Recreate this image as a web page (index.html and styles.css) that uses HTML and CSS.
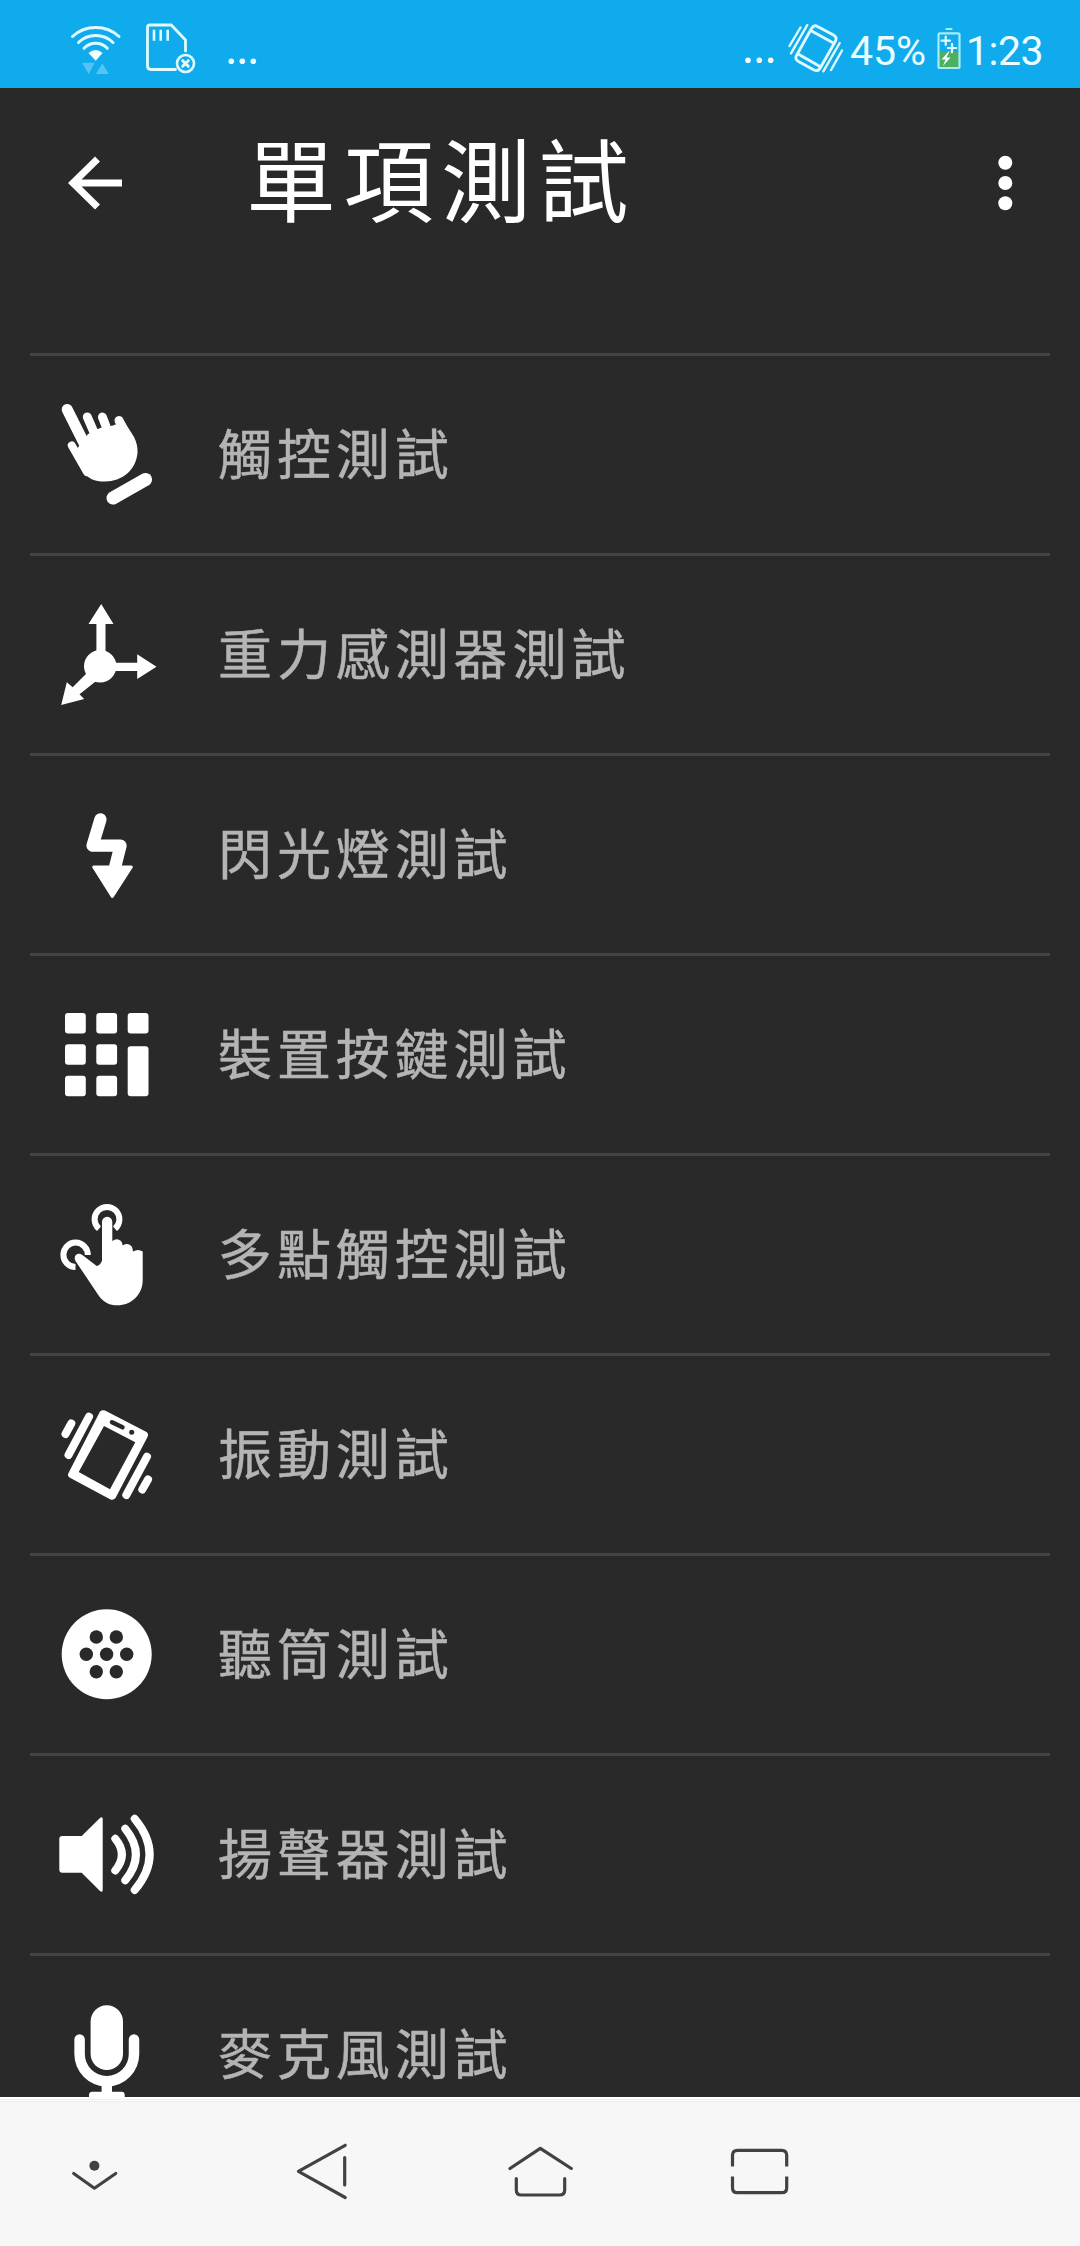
FILE: index.html
```html
<!DOCTYPE html>
<html lang="zh-Hant">
<head>
<meta charset="utf-8">
<title>單項測試</title>
<link rel="stylesheet" href="styles.css">
</head>
<body>
<div class="screen">
  <div class="status">
    <svg class="status-left" width="200" height="88" viewBox="65 0 200 88">
      <g class="line">
        <path stroke-width="3" d="M72.5 36.5Q82 27.5 95.7 27.5T119 36.5M78.5 42.5Q85.500 35.500 95.700 35.500T113 42.500M84 48.300Q89 43.300 95.700 43.300T107.300 48.300"/>
        <path stroke-width="2.800" d="M185.500 51V40L171.300 25H150Q147.500 25 147.500 27.500V66Q147.500 69.500 151 69.500H175.500"/>
        <path stroke-width="2.600" stroke-linecap="butt" d="M154 29.700V40.700M160.700 29.700V40.700M167.700 29.700V40.700"/>
        <circle cx="185.500" cy="63.500" r="8.500" stroke-width="2.600"/>
        <path stroke-width="3" d="M182.700 60.700L188.300 66.300M188.300 60.700L182.700 66.300"/>
      </g>
      <path class="solid" d="M88.500 53Q95.700 47 102.500 53L95.700 60.700Z"/>
      <path class="traffic" d="M82 62.700H94.700L88.700 74ZM96 74H108.700L102.300 63.300Z"/>
      <g class="solid"><circle cx="231.300" cy="61.300" r="2.800"/><circle cx="242.300" cy="61.300" r="2.800"/><circle cx="253.300" cy="61.300" r="2.800"/></g>
    </svg>
    <svg class="status-mode" width="106" height="88" viewBox="742 0 106 88">
      <g class="solid"><circle cx="748" cy="60.300" r="2.800"/><circle cx="759.300" cy="60.300" r="2.800"/><circle cx="770.700" cy="60.300" r="2.800"/></g>
      <g class="line" stroke-width="2.800">
        <path d="M817.500 26.500L833.500 35Q837.500 37.500 835.500 41L820.500 67.500Q818 72 814 70L798.500 61.500Q794.500 59 796.500 55.500L811.500 28.500Q814 24.500 817.500 26.500ZM811.500 31L832.500 42.500M799 54.500L820 66.500"/>
        <path stroke-width="2.400" d="M800.500 27.500L789.500 46M807.300 25L791 53.300M839.700 43L823.300 71.300M842 50.500L831 70"/>
      </g>
    </svg>
    <span class="pct">45%</span>
    <svg class="battery" width="26" height="88" viewBox="936 0 26 88">
      <path class="charge" d="M938.500 51.700H959.500V67.500H938.500Z"/>
      <g class="line" stroke-width="2.200">
        <rect x="938.500" y="33.300" width="21" height="34.700" rx="1.500" class="cell"/>
        <path class="cell" d="M946.300 29H951.500"/>
        <path d="M945.700 36.500V45M941.500 40.700H950M952 43.800V52.300M947.800 48H956.200"/>
      </g>
      <path class="solid" d="M948.500 51.500L941.500 59.500H945.500L943 66L950.500 57.500H946.500L949.500 51.500Z"/>
    </svg>
    <span class="clock">1:23</span>
  </div>

  <div class="header">
    <svg class="back" width="60" height="60" viewBox="0 0 60 60"><path d="M32.500 6L8 30L32.500 54M8 30H57"/></svg>
    <h1 class="title">單項測試</h1>
    <svg class="more" width="20" height="60" viewBox="0 0 20 60"><circle cx="10.300" cy="9.700" r="7"/><circle cx="10.300" cy="30" r="7"/><circle cx="10.300" cy="50.200" r="7"/></svg>
  </div>

  <ul class="tests">
    <li class="test">
      <svg class="icon" viewBox="0 0 104 107">
        <g class="draw" stroke-width="9.500">
          <path stroke-width="11" d="M11.200 8.500L29 44"/>
          <path stroke-width="9" d="M31.300 16L40 36M46.400 16L54 36M63 19.500L74 42"/>
          <path stroke-width="8" d="M15.800 44.500L31 71"/>
          <path stroke-width="13" d="M57 97L89.500 78.500"/>
        </g>
        <path d="M23 45L32 33L44 27L57 24.500L68 20L78 36Q82 44 81.500 52C80 69 66 80.500 49 80.500C38 80.500 32 77.500 27.400 70.700L20 50Z"/>
      </svg>
      <span class="label">觸控測試</span>
    </li>
    <li class="test">
      <svg class="icon" viewBox="0 0 104 107">
        <path d="M45.200 3L57.500 23H49.500V55H40.400V23H32.500Z"/>
        <circle cx="44.200" cy="65.300" r="16.200"/>
        <path d="M55 61.700H81.200V53.300L100.500 65.700L81.200 78V70H55Z"/>
        <path d="M5.200 104L10.800 81.300L16.700 86.300L35 68L44 77L23.500 93.300L28.200 98Z"/>
      </svg>
      <span class="label">重力感測器測試</span>
    </li>
    <li class="test">
      <svg class="icon" viewBox="0 0 104 107">
        <path class="draw" stroke-width="12.300" d="M44.400 18.500L36.500 44.700H64.500L58.600 68"/>
        <path class="draw filled" stroke-width="3" d="M37.700 66H75.300L56.300 95.500Z"/>
      </svg>
      <span class="label">閃光燈測試</span>
    </li>
    <li class="test">
      <svg class="icon" viewBox="0 0 104 107">
        <rect x="9" y="12" width="20.800" height="20.500" rx="3"/><rect x="40.300" y="12" width="20.800" height="20.500" rx="3"/><rect x="71.700" y="12" width="20.800" height="20.500" rx="3"/>
        <rect x="9" y="43.300" width="20.800" height="20.500" rx="3"/><rect x="40.300" y="43.300" width="20.800" height="20.500" rx="3"/><rect x="71.700" y="45.300" width="20.800" height="50" rx="3"/>
        <rect x="9" y="74.700" width="20.800" height="20.500" rx="3"/><rect x="40.300" y="74.700" width="20.800" height="20.500" rx="3"/>
      </svg>
      <span class="label">裝置按鍵測試</span>
    </li>
    <li class="test">
      <svg class="icon" viewBox="0 0 104 107">
        <path class="draw butt" stroke-width="6" d="M43 27.800A12.400 12.400 0 1 1 59 27.800M19.500 66A12.200 12.200 0 1 1 31.800 54"/>
        <path d="M46 21A5.150 5.150 0 0 1 56.300 21V40Q61 36.500 65 40Q66.500 42 66.700 44.500Q71.500 41.500 75.300 45Q77 47 77 50.500Q82 47.500 86.700 50.500V79C86.700 94 75 104.300 61.700 104.300C53 104.300 47 101 42.300 94L20 60.700C16 55 22 50 27 54.500L40.700 65Q44 64.500 46 59.700Z"/>
      </svg>
      <span class="label">多點觸控測試</span>
    </li>
    <li class="test">
      <svg class="icon" viewBox="0 0 104 107">
        <path fill-rule="evenodd" d="M44 10.500Q46 8.500 49 9.500L90.500 31Q93 33 91.500 36L59.500 97Q57.500 99.500 54.500 98.500L13.500 76.500Q11 74.500 12.500 72ZM48 25L79.300 41.300L54 88.300L22.700 71Z"/>
        <path class="draw hole" stroke-width="4.500" d="M56 21.300L66.500 26.300"/><circle class="hole-dot" cx="75.700" cy="31.300" r="2.500"/>
        <path class="draw" stroke-width="8" d="M33 15.700L12.500 54M15.300 22.500L9.500 33M91 55.700L70.300 94M92 78.500L86.300 88.500"/>
      </svg>
      <span class="label">振動測試</span>
    </li>
    <li class="test">
      <svg class="icon" viewBox="0 0 104 107">
        <circle cx="50.700" cy="53.300" r="45"/>
        <g class="hole-dot"><circle cx="40.300" cy="36" r="6.700"/><circle cx="60.300" cy="36" r="6.700"/><circle cx="30.300" cy="53.300" r="6.700"/><circle cx="50.600" cy="53.300" r="6.700"/><circle cx="70.700" cy="53.300" r="6.700"/><circle cx="40.300" cy="70.700" r="6.700"/><circle cx="60.300" cy="70.700" r="6.700"/></g>
      </svg>
      <span class="label">聽筒測試</span>
    </li>
    <li class="test">
      <svg class="icon" viewBox="0 0 104 107">
        <path d="M6.300 35H25.700L44 17Q46.700 15 46.700 18V89Q46.700 92 44 90L25.700 71.700H6.300Q3.300 71.700 3.300 68.700V38Q3.300 35 6.300 35Z"/>
        <path class="draw" stroke-width="8" d="M59.300 37.700Q72.500 53.500 59.300 69.500M69.300 27.700Q90.500 53.500 69.300 79.300M78.700 17.700Q108.500 53.500 78.700 89"/>
      </svg>
      <span class="label">揚聲器測試</span>
    </li>
    <li class="test">
      <svg class="icon" viewBox="0 0 104 107">
        <rect x="34.600" y="4.300" width="32.400" height="64.700" rx="16.200"/>
        <path class="draw" stroke-width="10.500" d="M23.600 38.500V53A27.200 27.200 0 0 0 78 53V38.500"/>
        <path d="M45.600 82H56V90.700H66Q68.700 91 68.700 94V107H33V94Q33 91 36 90.700H45.600Z"/>
      </svg>
      <span class="label">麥克風測試</span>
    </li>
  </ul>

  <div class="nav">
    <svg class="key" viewBox="0 0 120 149"><circle cx="46.400" cy="68.700" r="5"/><path d="M25.700 76.500L46.400 91.200L67.700 76.500"/></svg>
    <svg class="key" viewBox="0 0 120 149"><path d="M81.200 48.300L34.400 74.300L81.200 100.500M80.700 60.500V88"/></svg>
    <svg class="key" viewBox="0 0 120 149"><path d="M30 71.500L60.300 51.300L91.300 71.500M36.300 81.500V93Q36.300 98 41.300 98H79.700Q84.700 98 84.700 93V81.500"/></svg>
    <svg class="key" viewBox="0 0 120 149"><path class="flat" d="M36.500 69.500V58.300Q36.500 53.300 41.500 53.300H85.700Q90.700 53.300 90.700 58.300V69.500M36.500 79.500V90.700Q36.500 95.700 41.500 95.700H85.700Q90.700 95.700 90.700 90.700V79.500"/></svg>
  </div>
</div>
</body>
</html>
```
FILE: styles.css
```css
* { box-sizing: border-box; }

body {
  margin: 0;
  background: #292929;
  font-family: "Noto Sans CJK TC", "Noto Sans", sans-serif;
}

.screen {
  display: flex;
  flex-direction: column;
  width: 1080px;
  height: 2246px;
  overflow: hidden;
}

/* status bar */
.status {
  display: flex;
  flex: none;
  align-items: center;
  height: 88px;
  padding-left: 65px;
  background: #10abec;
  color: #ecfdff;
  font: 400 41px/88px Roboto, sans-serif;
}
.status-left { margin-right: 477px; }
.pct { width: 85px; margin-left: 2px; padding-top: 13px; white-space: nowrap; }
.battery { flex: none; margin-left: 1px; }
.clock { margin-left: 4px; padding-top: 14px; letter-spacing: -0.500px; }
.line { fill: none; stroke: #e0fbff; stroke-linecap: round; stroke-linejoin: round; }
.solid { fill: #f0feff; }
.traffic { fill: #55c4f5; }
.charge { fill: #4caf61; }
.cell { stroke: #a5ecf5; }

/* title bar */
.header {
  display: flex;
  flex: none;
  align-items: center;
  height: 189px;
  margin-bottom: 76px;
  padding: 0 65px 0 65px;
  color: #fff;
}
.back { fill: none; stroke: #fff; stroke-width: 7; }
.title {
  margin: 0 auto 0 121px;
  padding-bottom: 13px;
  font-size: 90px;
  font-weight: 400;
  line-height: 120px;
  letter-spacing: 7.500px;
}
.more { fill: #fff; }

/* test list */
.tests {
  flex: 1;
  min-height: 0;
  margin: 0;
  padding: 0 30px;
  overflow: hidden;
  list-style: none;
}
.test {
  display: flex;
  align-items: center;
  height: 200px;
  padding-left: 26px;
  border-top: 3px solid #444;
  color: #b4b4b4;
  font-size: 54px;
  letter-spacing: 4.900px;
}
.label {
  padding-bottom: 6px;
  -webkit-text-stroke: 0.500px #b4b4b4;
}
.icon {
  width: 104px;
  height: 107px;
  margin-right: 58px;
  fill: #fff;
}
.draw { fill: none; stroke: #fff; stroke-linecap: round; stroke-linejoin: round; }
.butt { stroke-linecap: butt; }
.filled { fill: #fff; }
.hole { stroke: #292929; }
.hole-dot { fill: #292929; }

/* navigation keys */
.nav {
  display: grid;
  grid-template-columns: repeat(5, 1fr);
  justify-items: center;
  flex: none;
  height: 149px;
  background: linear-gradient(#fff 2px, #ececec 2px 3px, #fff 3px 4px, #ededed 4px 5px, #f7f7f7 5px);
}
.key { width: 120px; height: 149px; fill: #424242; }
.key path { fill: none; stroke: #424242; stroke-width: 3.200; stroke-linecap: round; stroke-linejoin: round; }
.key .flat { stroke-linecap: butt; }
```
